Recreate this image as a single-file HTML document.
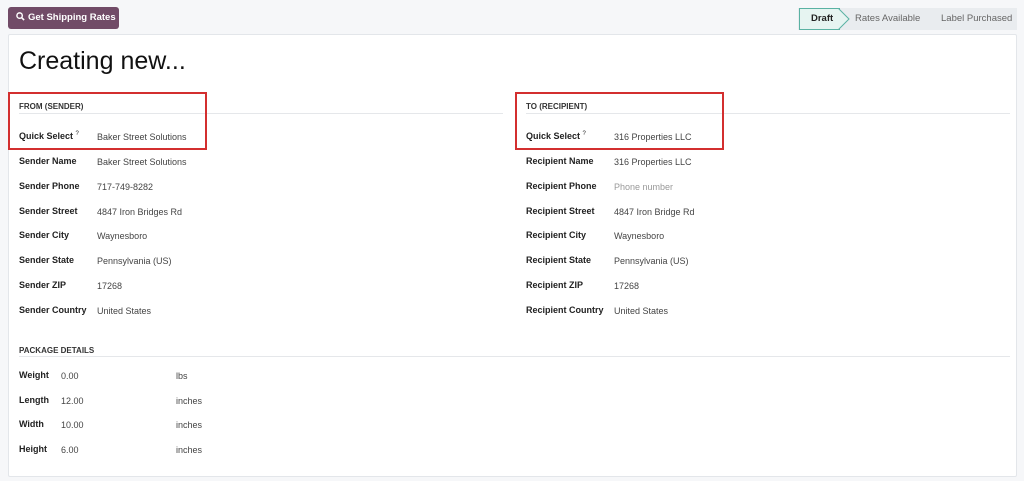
<!DOCTYPE html>
<html><head><style>
body{margin:0;width:1024px;height:481px;background:#f6f7f9;font-family:"Liberation Sans",sans-serif;color:#222;position:relative;overflow:hidden}
.a{position:absolute;white-space:nowrap}
.btn{left:8px;top:7px;width:111px;height:22px;background:#714b67;border-radius:3px;color:#fff;font-size:9.5px;font-weight:bold;line-height:22px;text-indent:8px}
.card{left:8px;top:34px;width:1007px;height:441px;background:#fff;border:1px solid #e3e6ea;border-radius:2px}
.lb{font-size:9px;font-weight:bold;color:#222}
.v{font-size:9px;color:#444}
.h{font-size:8px;font-weight:bold;color:#333}
.line{height:1px;background:#e5e7ea}
.red{border:2px solid #d32f2f}
</style></head><body>
<div class="a btn"><svg width="9" height="9" viewBox="0 0 10 10" style="vertical-align:-1px;margin-right:3px"><circle cx="4" cy="4" r="3" fill="none" stroke="#fff" stroke-width="1.6"/><path d="M6.2 6.2L9 9" stroke="#fff" stroke-width="1.8"/></svg>Get Shipping Rates</div>
<div class="a" style="left:798px;top:8px;width:219px;height:22px;background:#e9ecef"></div>
<div class="a" style="left:799px;top:8px;width:40px;height:20px;background:#e6f4f1;border:1px solid #5ab2a3;border-right:none;font-size:9.5px;font-weight:bold;line-height:20px;text-indent:11px">Draft</div>
<svg class="a" style="left:838px;top:8px" width="14" height="22"><path d="M0 0L11 11L0 22" fill="#e6f4f1" stroke="#5ab2a3"/></svg>
<div class="a" style="left:855px;top:13px;font-size:9.5px;color:#666">Rates Available</div>
<div class="a" style="left:941px;top:13px;font-size:9.5px;color:#666">Label Purchased</div>
<div class="a card"></div>
<div class="a" style="left:19px;top:47px;font-size:25px;color:#111">Creating new...</div>
<div class="a h" style="left:19px;top:102px">FROM (SENDER)</div>
<div class="a h" style="left:526px;top:102px">TO (RECIPIENT)</div>
<div class="a line" style="left:19px;top:113px;width:484px"></div>
<div class="a line" style="left:526px;top:113px;width:484px"></div>
<div class="a red" style="left:8px;top:92px;width:195px;height:54px"></div>
<div class="a red" style="left:515px;top:92px;width:205px;height:54px"></div>
<div class="a lb" style="left:19px;top:131px">Quick Select <sup style="font-size:6px;font-weight:normal">?</sup></div>
<div class="a v" style="left:97px;top:132px">Baker Street Solutions</div>
<div class="a lb" style="left:526px;top:131px">Quick Select <sup style="font-size:6px;font-weight:normal">?</sup></div>
<div class="a v" style="left:614px;top:132px">316 Properties LLC</div>

<div class="a lb" style="left:19px;top:156px">Sender Name</div><div class="a v" style="left:97px;top:157px">Baker Street Solutions</div>
<div class="a lb" style="left:19px;top:181px">Sender Phone</div><div class="a v" style="left:97px;top:182px">717-749-8282</div>
<div class="a lb" style="left:19px;top:206px">Sender Street</div><div class="a v" style="left:97px;top:207px">4847 Iron Bridges Rd</div>
<div class="a lb" style="left:19px;top:230px">Sender City</div><div class="a v" style="left:97px;top:231px">Waynesboro</div>
<div class="a lb" style="left:19px;top:255px">Sender State</div><div class="a v" style="left:97px;top:256px">Pennsylvania (US)</div>
<div class="a lb" style="left:19px;top:280px">Sender ZIP</div><div class="a v" style="left:97px;top:281px">17268</div>
<div class="a lb" style="left:19px;top:305px">Sender Country</div><div class="a v" style="left:97px;top:306px">United States</div>

<div class="a lb" style="left:526px;top:156px">Recipient Name</div><div class="a v" style="left:614px;top:157px">316 Properties LLC</div>
<div class="a lb" style="left:526px;top:181px">Recipient Phone</div><div class="a v" style="left:614px;top:182px;color:#999">Phone number</div>
<div class="a lb" style="left:526px;top:206px">Recipient Street</div><div class="a v" style="left:614px;top:207px">4847 Iron Bridge Rd</div>
<div class="a lb" style="left:526px;top:230px">Recipient City</div><div class="a v" style="left:614px;top:231px">Waynesboro</div>
<div class="a lb" style="left:526px;top:255px">Recipient State</div><div class="a v" style="left:614px;top:256px">Pennsylvania (US)</div>
<div class="a lb" style="left:526px;top:280px">Recipient ZIP</div><div class="a v" style="left:614px;top:281px">17268</div>
<div class="a lb" style="left:526px;top:305px">Recipient Country</div><div class="a v" style="left:614px;top:306px">United States</div>

<div class="a h" style="left:19px;top:346px">PACKAGE DETAILS</div>
<div class="a line" style="left:19px;top:356px;width:991px"></div>
<div class="a lb" style="left:19px;top:370px">Weight</div><div class="a v" style="left:61px;top:371px">0.00</div><div class="a v" style="left:176px;top:371px">lbs</div>
<div class="a lb" style="left:19px;top:395px">Length</div><div class="a v" style="left:61px;top:396px">12.00</div><div class="a v" style="left:176px;top:396px">inches</div>
<div class="a lb" style="left:19px;top:419px">Width</div><div class="a v" style="left:61px;top:420px">10.00</div><div class="a v" style="left:176px;top:420px">inches</div>
<div class="a lb" style="left:19px;top:444px">Height</div><div class="a v" style="left:61px;top:445px">6.00</div><div class="a v" style="left:176px;top:445px">inches</div>
</body></html>
